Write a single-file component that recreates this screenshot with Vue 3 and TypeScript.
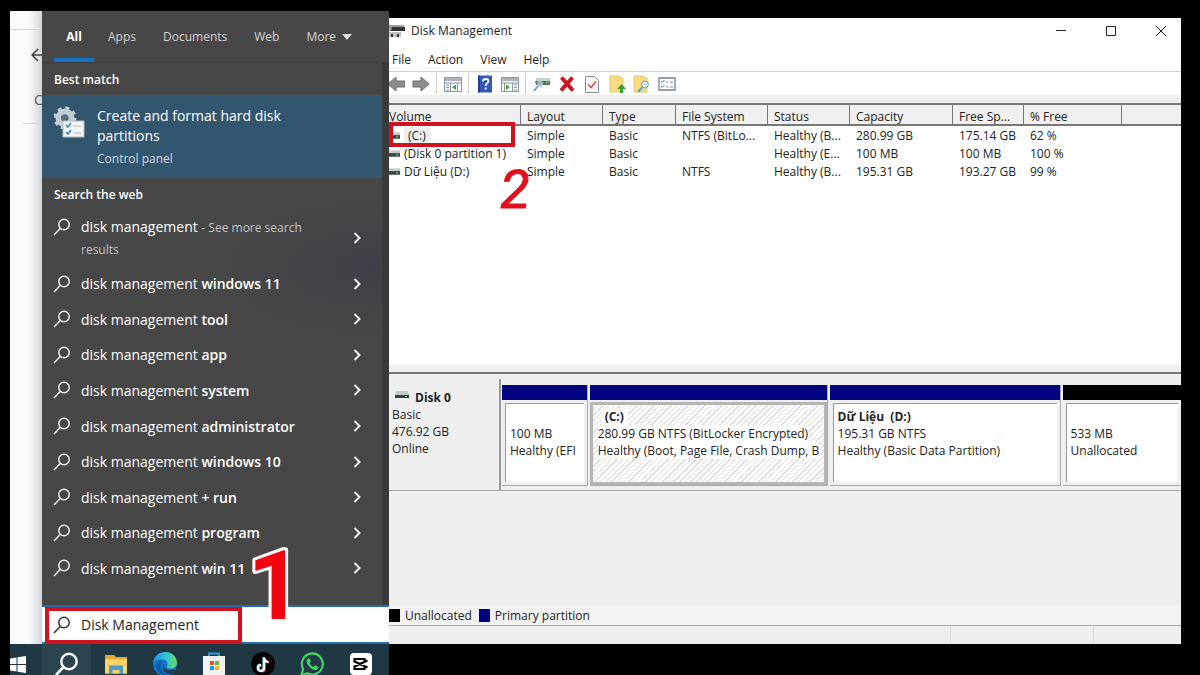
<script setup lang="ts">
import { ref } from 'vue'

interface Volume {
  name: string
  layout: string
  type: string
  fs: string
  status: string
  capacity: string
  free: string
  percent: string
}

interface Partition {
  title: string
  size: string
  status: string
  kind: 'primary' | 'unallocated'
  share: number
  selected?: boolean
}

const query = ref('Disk Management')
const activeTab = ref('All')
const tabs = ['All', 'Apps', 'Documents', 'Web', 'More']
const suggestions = [
  'windows 11', 'tool', 'app', 'system', 'administrator',
  'windows 10', '+ run', 'program', 'win 11',
]
const menus = ['File', 'Action', 'View', 'Help']
const tools = [
  'back', 'forward', '|', 'tree', '|', 'help', 'pane', '|',
  'disk', 'delete', 'check', 'up', 'find', 'properties',
]
const headers = ['Volume', 'Layout', 'Type', 'File System', 'Status', 'Capacity', 'Free Sp...', '% Free', '']

const volumes: Volume[] = [
  { name: '(C:)', layout: 'Simple', type: 'Basic', fs: 'NTFS (BitLo...', status: 'Healthy (B...', capacity: '280.99 GB', free: '175.14 GB', percent: '62 %' },
  { name: '(Disk 0 partition 1)', layout: 'Simple', type: 'Basic', fs: '', status: 'Healthy (E...', capacity: '100 MB', free: '100 MB', percent: '100 %' },
  { name: 'Dữ Liệu (D:)', layout: 'Simple', type: 'Basic', fs: 'NTFS', status: 'Healthy (B...', capacity: '195.31 GB', free: '193.27 GB', percent: '99 %' },
]

const partitions: Partition[] = [
  { title: '', size: '100 MB', status: 'Healthy (EFI', kind: 'primary', share: 85 },
  { title: '(C:)', size: '280.99 GB NTFS (BitLocker Encrypted)', status: 'Healthy (Boot, Page File, Crash Dump, B', kind: 'primary', share: 238, selected: true },
  { title: 'Dữ Liệu\u00a0 (D:)', size: '195.31 GB NTFS', status: 'Healthy (Basic Data Partition)', kind: 'primary', share: 231 },
  { title: '', size: '533 MB', status: 'Unallocated', kind: 'unallocated', share: 119 },
]
</script>

<template>
  <main class="screen">
    <section class="desktop">
      <div class="upper">
        <div class="behind">
          <div class="behind-top"></div>
          <svg class="behind-arrow" viewBox="0 0 12 16" aria-hidden="true"><path d="M12 8H2M8 2L2 8l6 6" fill="none" stroke="#444" stroke-width="1.5" /></svg>
          <div class="behind-text">C</div>
        </div>

        <div class="search">
          <nav class="tabs">
            <button v-for="t in tabs" :key="t" type="button" :class="{ active: t === activeTab }" @click="activeTab = t">
              {{ t }}<svg v-if="t === 'More'" viewBox="0 0 10 6" class="caret" aria-hidden="true"><path d="M0 0h10L5 6z" fill="#ddd" /></svg>
            </button>
          </nav>
          <div class="results">
            <h2>Best match</h2>
            <button type="button" class="best">
              <svg viewBox="0 0 32 32" class="gear" aria-hidden="true">
                <g stroke="#c3cdd4" fill="none">
                  <circle cx="11" cy="12" r="6.5" stroke-width="6" />
                  <circle cx="11" cy="12" r="10" stroke-width="3" stroke-dasharray="4 3.850" />
                </g>
                <circle cx="10.500" cy="12" r="3.500" fill="#586c7a" />
                <path d="M9 15h21v16H9z" fill="#f4f5f6" stroke="#b5b9bc" />
                <path d="M12 19l2 2 3-4M12 26l2 2 3-4" fill="none" stroke="#3b82b8" stroke-width="1.5" />
                <path d="M19 20h8M19 27h8" stroke="#b9bcc0" />
              </svg>
              <span class="best-text">
                <span class="best-title">Create and format hard disk partitions</span>
                <span class="best-sub">Control panel</span>
              </span>
            </button>
            <h2>Search the web</h2>
            <ul class="list">
              <li class="first">
                <button type="button">
                  <svg viewBox="0 0 18 18" class="lens" aria-hidden="true"><circle cx="11" cy="6.5" r="5.2" /><path d="M7.2 10.4L1 17" /></svg>
                  <span class="label">disk management <small>- See more search results</small></span>
                  <svg viewBox="0 0 8 12" class="chev" aria-hidden="true"><path d="M1.5 1l5 5-5 5" /></svg>
                </button>
              </li>
              <li v-for="s in suggestions" :key="s">
                <button type="button">
                  <svg viewBox="0 0 18 18" class="lens" aria-hidden="true"><circle cx="11" cy="6.5" r="5.2" /><path d="M7.2 10.4L1 17" /></svg>
                  <span class="label">disk management <b>{{ s }}</b></span>
                  <svg viewBox="0 0 8 12" class="chev" aria-hidden="true"><path d="M1.5 1l5 5-5 5" /></svg>
                </button>
              </li>
            </ul>
          </div>
          <label class="box">
            <svg viewBox="0 0 18 18" class="lens dark" aria-hidden="true"><circle cx="11" cy="6.5" r="5.2" /><path d="M7.2 10.4L1 17" /></svg>
            <input v-model="query" type="text" aria-label="Search" />
            <span class="mark mark-box"></span>
          </label>
          <svg class="mark-one" viewBox="0 0 40 84" aria-label="Step 1"><text x="20" y="76" text-anchor="middle">1</text></svg>
        </div>
      </div>

      <div class="taskbar">
        <button type="button" class="start" aria-label="Start">
          <svg viewBox="0 0 16 17"><path d="M0 2.5l6.5-1v6.500H0zM7.500 1.300L16 0v8H7.500zM0 9h6.500v6.500l-6.500-1zM7.500 9H16v8l-8.500-1.300z" fill="#fff" /></svg>
        </button>
        <button type="button" class="on" aria-label="Search">
          <svg viewBox="0 0 24 24"><circle cx="14" cy="9.500" r="7.700" fill="none" stroke="#fff" stroke-width="2.400" /><path d="M8.500 15L1 23" stroke="#fff" stroke-width="2.600" /></svg>
        </button>
        <button type="button" aria-label="File Explorer">
          <svg viewBox="0 0 24 24"><path d="M1 3h9l2 2h11v17H1z" fill="#e6a92f" /><path d="M1 7h22v14H1z" fill="#fbd367" /><path d="M5 22v-8.500h14V22h-3.500v-4h-7v4z" fill="#4b9cc9" /></svg>
        </button>
        <button type="button" aria-label="Edge">
          <svg viewBox="0 0 24 24">
            <defs>
              <linearGradient id="edgeTop" x1="0" x2="1" y1="0" y2="0"><stop offset="0" stop-color="#1b8fdc" /><stop offset="0.550" stop-color="#35c1d6" /><stop offset="1" stop-color="#66d957" /></linearGradient>
            </defs>
            <circle cx="12" cy="12" r="12" fill="#1373c9" />
            <path d="M0 11C1 4 6 0 12 0c7 0 12 5 12 10.500 0 4-3 6-6.500 6-3 0-4.500-1.300-3.500-2.500 1.500-2 .5-6-4-6.500C5.500 7 1.500 9 0 11z" fill="url(#edgeTop)" />
            <path d="M9 10c-3 4-1 11 6 12.500-8 1.500-13-5-11-10.500C5 9.500 7.500 9 9 10z" fill="#0c59a4" />
            <path d="M10.500 12c-1 4 3 8 12 5.500-1 2-2.500 3.500-4.500 4.500-6 0-10-5-7.500-10z" fill="#203a46" />
          </svg>
        </button>
        <button type="button" aria-label="Microsoft Store">
          <svg viewBox="0 0 24 24"><path d="M7 5V1.500h10V5" fill="none" stroke="#2c9fd6" stroke-width="1.800" /><path d="M1 4h22v18q0 2-2 2H3q-2 0-2-2z" fill="#f2f2f2" /><path d="M8 9h4v4H8z" fill="#e8502c" /><path d="M13 9h4v4h-4z" fill="#72b42b" /><path d="M8 14h4v4H8z" fill="#1d9be0" /><path d="M13 14h4v4h-4z" fill="#f7b51b" /></svg>
        </button>
        <button type="button" aria-label="TikTok">
          <svg viewBox="0 0 24 24"><circle cx="12" cy="12" r="12" fill="#000" /><g fill="none" stroke-width="2.200"><path d="M12.500 5v10.500a3 3 0 1 1-3-3M12.500 5.500c.5 2.500 2 4 4.500 4" stroke="#3fd6dc" /><path d="M13.700 6v10.500a3 3 0 1 1-3-3M13.700 6.500c.5 2.500 2 4 4.500 4" stroke="#f13a5f" /><path d="M13 5.500V16a3 3 0 1 1-3-3M13 6c.5 2.500 2 4 4.500 4" stroke="#fff" /></g></svg>
        </button>
        <button type="button" aria-label="WhatsApp">
          <svg viewBox="0 0 24 24"><path d="M1.500 23l1.600-6A10.500 10.500 0 1 1 7.500 21.300z" fill="#203a46" stroke="#43d160" stroke-width="2.200" /><path d="M8 6.500c-2 1-2 3.500 0 6.500s5 5 7.500 5c1.500 0 3-1.500 3-3l-3.500-1.700-1.500 1.700c-2-1-3-2-4-4L11 9.500 9.500 6.500z" fill="#43d160" /></svg>
        </button>
        <button type="button" aria-label="CapCut">
          <svg viewBox="0 0 24 24"><rect x="1" y="1" width="22" height="22" rx="4" fill="#fff" /><path d="M15.500 10V7H5.500v2.500l13 6M15.500 14v3H5.500v-2.500l13-6" fill="none" stroke="#000" stroke-width="2.200" /></svg>
        </button>
      </div>
    </section>

    <section class="window">
      <header class="title">
        <svg viewBox="0 0 16 16" class="app-icon" aria-hidden="true"><path d="M0 2h15l1 6H0z" fill="#9aa09f" /><path d="M3 4h13v4H2z" fill="#2f3436" /><path d="M0 9h12v5H0z" fill="#bfc2c2" /><path d="M2 11h2v3H2zM8 11h2v3H8z" fill="#333" /></svg>
        <h1>Disk Management</h1>
        <button type="button" aria-label="Minimize"><svg viewBox="0 0 12 12"><path d="M1 5.500h10" /></svg></button>
        <button type="button" aria-label="Maximize"><svg viewBox="0 0 12 12"><path d="M1.500 1.500h9v9h-9z" /></svg></button>
        <button type="button" aria-label="Close"><svg viewBox="0 0 12 12"><path d="M1 1l10 10M11 1L1 11" /></svg></button>
      </header>
      <nav class="menu"><button v-for="m in menus" :key="m" type="button">{{ m }}</button></nav>
      <div class="toolbar">
        <template v-for="(t, i) in tools" :key="i">
          <span v-if="t === '|'" class="sep"></span>
          <button v-else type="button" :class="{ clipped: t === 'back' }" :aria-label="t">
            <svg v-if="t === 'back'" viewBox="2 0 16 18"><path d="M1 9l8-7v4h9v6H9v4z" fill="#8d8d8d" stroke="#6d6d6d" /></svg>
            <svg v-else-if="t === 'forward'" viewBox="0 0 18 18"><path d="M17 9l-8-7v4H1v6h8v4z" fill="#8d8d8d" stroke="#6d6d6d" /></svg>
            <svg v-else-if="t === 'tree' || t === 'pane'" viewBox="0 0 18 18">
              <path d="M.5 2.500h17v14H.5z" fill="#f5f7f8" stroke="#8d979e" /><path d="M1 3h16v3H1z" fill="#a9b4bb" /><path d="M1 8h16" stroke="#8d979e" />
              <template v-if="t === 'tree'"><path d="M6.500 8v8M13.500 8v8" stroke="#8d979e" /><path d="M2 10h3M2 12.500h3M2 15h3" stroke="#7d9ebd" /><path d="M12 9.500v5.500L8 12.200z" fill="#3fa535" /></template>
              <template v-else><path d="M3.500 8v8M11.500 8v8" stroke="#8d979e" /><path d="M13 10h3M13 12.500h3M13 15h3" stroke="#7d9ebd" /><path d="M5 9.500v5.500l4-2.800z" fill="#3fa535" /></template>
            </svg>
            <svg v-else-if="t === 'help'" viewBox="0 0 18 18"><path d="M2 .5h14v17H2z" fill="#3558b7" /><path d="M2 .5h2v17H2z" fill="#243f8d" /><path d="M7 6.500q0-2.500 2.700-2.500t2.700 2.300q0 1.500-1.700 2.500-1 .7-1 2.200M9.700 12.500v2" fill="none" stroke="#fff" stroke-width="1.800" /></svg>
            <svg v-else-if="t === 'disk'" viewBox="0 0 18 18"><path d="M3 3h14v3H3z" fill="#c9cece" /><path d="M2 6h15v4H3z" fill="#59686b" /><path d="M13 7.500h2.500" stroke="#5fe066" stroke-width="1.500" /><circle cx="7" cy="9" r="3.200" fill="#a9cde3" fill-opacity=".8" /><path d="M5 11l-4 5" stroke="#6d9fc4" stroke-width="2" /></svg>
            <svg v-else-if="t === 'delete'" viewBox="0 0 18 18"><path d="M3.500 2.500l11.500 13M14.500 2.500L3 15.500" stroke="#cf1420" stroke-width="4" /></svg>
            <svg v-else-if="t === 'check'" viewBox="0 0 18 18"><path d="M2.500 1.500h9l4 4v12h-13z" fill="#fafafa" stroke="#8c8c8c" /><path d="M5 9.500l3 3 5-6" fill="none" stroke="#dd5147" stroke-width="1.700" /></svg>
            <svg v-else-if="t === 'up'" viewBox="0 0 18 18"><path d="M2 1h9l1 2h3v14H2z" fill="#f6dd84" stroke="#e5c55c" /><path d="M12 18v-4H9l4.500-5 4.500 5h-3v4z" fill="#35a22f" /></svg>
            <svg v-else-if="t === 'find'" viewBox="0 0 18 18"><path d="M1 1h9l1 2h3v14H1z" fill="#f6dd84" stroke="#e5c55c" /><circle cx="12" cy="9.500" r="3.500" fill="#cfe6f5" stroke="#7da4bf" /><path d="M9.500 12L5 17" stroke="#6d9fc4" stroke-width="2" /></svg>
            <svg v-else viewBox="0 0 18 18"><path d="M1 3h16v12H1z" fill="#fbfbfb" stroke="#77838d" stroke-width="1.300" /><path d="M3 6l1.200 1.500L6.500 5M3 11l1.200 1.500L6.500 10" fill="none" stroke="#2f7ec1" /><path d="M8 7h2.500M12 7h3M8 12h2.500M12 12h3" stroke="#8b959d" /></svg>
          </button>
        </template>
      </div>

      <div class="volumes">
        <table>
          <colgroup><col class="c1" /><col class="c2" /><col class="c3" /><col class="c4" /><col class="c5" /><col class="c6" /><col class="c7" /><col class="c8" /><col /></colgroup>
          <thead><tr><th v-for="h in headers" :key="h" scope="col">{{ h }}</th></tr></thead>
          <tbody>
            <tr v-for="(v, i) in volumes" :key="v.name">
              <td><div class="volume" :class="{ picked: i === 0 }"><svg viewBox="0 0 12 8" class="drive" aria-hidden="true"><path d="M0 0h12v3H0z" fill="#c5caca" /><path d="M0 3h12v4H0z" fill="#3d4547" /><path d="M8 5h2" stroke="#52e05b" stroke-width="1.500" /></svg><span>{{ v.name }}</span></div></td>
              <td>{{ v.layout }}</td><td>{{ v.type }}</td><td>{{ v.fs }}</td><td>{{ v.status }}</td><td>{{ v.capacity }}</td><td>{{ v.free }}</td><td>{{ v.percent }}</td><td></td>
            </tr>
          </tbody>
        </table>
        <span class="mark mark-volume"></span>
        <svg class="mark-two" viewBox="0 0 44 54" aria-label="Step 2"><text x="22" y="46" text-anchor="middle">2</text></svg>
      </div>

      <div class="graph">
        <div class="splitter"></div>
        <div class="disk-row">
          <div class="disk">
            <div class="disk-name"><svg viewBox="0 0 14 8" aria-hidden="true"><path d="M1 0h12l1 4H0z" fill="#bcc9c4" /><path d="M0 4h14v3H0z" fill="#39413f" /><path d="M10 5.500h2" stroke="#57d95f" /></svg><b>Disk 0</b></div>
            <div>Basic</div><div>476.92 GB</div><div>Online</div>
          </div>
          <div class="parts">
            <div v-for="p in partitions" :key="p.size" class="part" :class="[p.kind, { selected: p.selected }]" :style="{ flexGrow: p.share }">
              <div class="bar"></div>
              <div class="body">
                <div><b>{{ p.title || '\u00a0' }}</b></div><div><span>{{ p.size }}</span></div><div><span>{{ p.status }}</span></div>
              </div>
            </div>
          </div>
        </div>
        <div class="empty"></div>
        <div class="legend"><i class="key black"></i><span>Unallocated</span><i class="key navy"></i><span>Primary partition</span></div>
        <div class="status"><span></span><span></span><span></span></div>
      </div>
    </section>
  </main>
</template>

<style>
body { margin: 0; background: #000; }
</style>

<style scoped>
* { box-sizing: border-box; }
.screen {
  display: flex;
  height: 100vh;
  min-height: 600px;
  padding: 11px 19px 0 10px;
  background: #000;
  overflow: hidden;
  font: 12px/18px "Open Sans", "Noto Sans", sans-serif;
  color: #222;
}
button { border: 0; padding: 0; margin: 0; background: none; font: inherit; color: inherit; text-align: left; }
svg { display: block; flex: none; }
h1, h2 { margin: 0; }

.desktop { flex: none; width: 379px; display: flex; flex-direction: column; }
.upper { flex: 1; min-height: 0; display: flex; }
.behind { width: 32px; background: linear-gradient(90deg, #fafbfd 60%, #d4d5d8); overflow: hidden; }
.behind-top { height: 19px; border-bottom: 1px solid #d5d6da; }
.behind-arrow { width: 12px; height: 16px; margin: 17px 0 0 20px; }
.behind-text { margin: 26px 0 0 13px; padding: 0 0 12px 11px; border-bottom: 1px solid #d0d1d4; font-size: 14px; line-height: 22px; color: #555; }

.search { position: relative; flex: 1; min-width: 0; display: flex; flex-direction: column; background: #474747; color: #fff; }
.tabs { display: flex; height: 52px; padding-left: 12px; border-bottom: 1px solid #3e3e3e; color: #d4d4d4; }
.tabs button { display: flex; align-items: center; justify-content: center; margin-right: 14px; padding-top: 4px; border-bottom: 4px solid transparent; }
.tabs button:nth-child(n + 2) { margin-right: 27px; }
.tabs .active { width: 40px; border-color: #1472c4; color: #fff; font-weight: 700; }
.caret { width: 10px; height: 6px; margin-left: 6px; }
.results {
  flex: 1; min-height: 0; display: flex; flex-direction: column; border-right: 7px solid #3a3a3a;
  background: radial-gradient(ellipse 160px 70px at 100% 205px, #403f49, transparent);
}
h2 { padding: 7px 12px 6px; font-size: 12px; line-height: 19px; font-weight: 600; }
.best { display: flex; gap: 11px; height: 83px; padding: 11px 12px; background: #33566f; }
.gear { width: 32px; height: 32px; }
.best-text { display: flex; flex-direction: column; max-width: 210px; }
.best-title { font-size: 14px; line-height: 20px; }
.best-sub { margin-top: 4px; color: #d0dae2; }
.list { flex: 1; display: flex; flex-direction: column; margin: 0; padding: 0 0 19px; list-style: none; }
.list li { flex: 1; display: flex; }
.list .first { flex: none; height: 56px; }
.list button { flex: 1; display: flex; align-items: center; gap: 10px; padding: 0 21px 0 11px; font-size: 14px; line-height: 21px; }
.lens { width: 18px; height: 18px; fill: none; stroke: #eee; stroke-width: 1.5; }
.dark { stroke: #333; }
.first .lens { align-self: flex-start; margin-top: 8px; }
.label { flex: 1; }
.label b { font-weight: 600; }
.label small { font-size: 12px; color: #c4c4c4; }
.first .label { padding-right: 30px; }
.chev { width: 8px; height: 12px; fill: none; stroke: #eee; stroke-width: 2; }
.box { position: relative; display: flex; align-items: center; gap: 10px; height: 39px; padding: 0 11px; background: #fff; border: solid #1f6fb4; border-width: 2px 0; }
.box input { flex: 1; min-width: 0; border: 0; padding: 0; outline: 0; background: none; color: #222; font: inherit; font-size: 14px; }
.mark { position: absolute; border: 4px solid #d01120; pointer-events: none; }
.mark-box { left: 3px; top: 0; width: 197px; height: 37px; }
.mark-one { position: absolute; left: 213px; bottom: 17px; width: 40px; height: 84px; overflow: visible; }
.mark-one text { font: 700 96px "Liberation Sans Narrow", Roboto, sans-serif; fill: #f4040f; stroke: #fff; stroke-width: 6px; stroke-linejoin: round; paint-order: stroke; }

.taskbar { flex: none; display: flex; height: 31px; background: #203843; overflow: hidden; }
.taskbar button { width: 49px; display: flex; justify-content: center; padding-top: 8px; }
.taskbar .start { width: 32px; justify-content: flex-start; padding-top: 12px; }
.taskbar .start svg { width: 16px; height: 17px; }
.taskbar .on { background: #2b444f; }
.taskbar svg { width: 24px; height: 24px; }

.window { flex: 1; min-width: 0; display: flex; flex-direction: column; margin: 7px 0 31px; background: #fff; }
.title { display: flex; align-items: center; height: 25px; }
.app-icon { width: 16px; height: 16px; }
h1 { flex: 1; padding-left: 6px; font-size: 12px; font-weight: 400; }
.title button { width: 50px; height: 24px; display: flex; align-items: center; justify-content: center; }
.title button:last-child { width: 45px; padding-left: 5px; }
.title button svg { width: 12px; height: 12px; fill: none; stroke: #222; stroke-width: 1; }
.menu { display: flex; gap: 17px; height: 29px; padding: 5px 3px 0; border-bottom: 1px solid #d0d0d0; }
.toolbar { display: flex; align-items: center; height: 31px; border-bottom: 8px solid #eee; }
.toolbar button { width: 25px; display: flex; justify-content: center; }
.toolbar svg { width: 18px; height: 18px; }
.toolbar .clipped { width: 19px; justify-content: flex-start; }
.toolbar .clipped svg { width: 16px; }
.sep { width: 1px; height: 21px; margin: 0 3px; background: #cfcfcf; }

.volumes { position: relative; flex: 262; min-height: 0; }
table { width: 100%; border-collapse: separate; border-spacing: 0; table-layout: fixed; }
.c1 { width: 132px; } .c2 { width: 82px; } .c3 { width: 73px; } .c4 { width: 92px; } .c5 { width: 82px; }
.c6 { width: 103px; } .c7 { width: 71px; } .c8 { width: 98px; }
th { height: 22px; padding: 4px 0 0 6px; background: #f0f0f0; border: solid #777; border-width: 2px 1px 2px 0; font-weight: 400; text-align: left; line-height: 15px; white-space: nowrap; }
th:first-child { padding-left: 0; }
th:last-child { border-right: 0; }
tbody::before { content: ""; display: table-row; height: 1px; }
td { height: 18px; padding: 0 0 0 6px; line-height: 18px; white-space: nowrap; }
td:first-child { padding: 0; }
.volume { display: flex; align-items: center; gap: 4px; }
.picked span { padding: 0 4px; background: #eee; }
.drive { width: 11px; height: 8px; }
.mark-volume { left: 0; top: 19px; width: 126px; height: 25px; }
.mark-two { position: absolute; left: 104px; top: 59px; width: 44px; height: 54px; overflow: visible; }
.mark-two text { font: italic 400 54px Roboto, sans-serif; fill: #e3101c; stroke: #e3101c; stroke-width: 1px; stroke-linejoin: round; }

.graph { flex: 279; min-height: 0; display: flex; flex-direction: column; background: #efefef; }
.splitter { height: 9px; border-bottom: 2px solid #777; }
.disk-row { display: flex; height: 117px; padding-top: 5px; border-bottom: 1px solid #aaa; }
.disk { width: 112px; padding: 9px 3px; border-right: 2px solid #999; line-height: 17px; }
.disk-name { display: flex; align-items: center; gap: 6px; padding: 1px 0 0 3px; }
.disk-name svg { width: 14px; height: 8px; margin-bottom: 6px; }
.parts { flex: 1; min-width: 0; display: flex; gap: 2px; padding: 6px 0 4px 1px; }
.part { flex: 1 1 0; min-width: 0; display: flex; flex-direction: column; border-right: 1px solid #aaa; border-bottom: 1px solid #aaa; }
.part:last-child { border-right: 0; }
.bar { height: 15px; background: #000080; }
.unallocated .bar { background: #000; }
.body { flex: 1; margin: 3px; padding: 4px 0 0 4px; border: solid #999; border-width: 1px 0 0 1px; background: #fff; line-height: 17px; white-space: nowrap; overflow: hidden; }
.selected .body { margin: 2px 0 0; border: 3px solid #b5b5b5; padding: 3px 0 0 5px; background: repeating-linear-gradient(135deg, #fff 0 3px, #ddd 3px 4px); }
.selected .body span { background: #fff; }
.selected .body b { margin-left: 3px; padding: 0 4px; background: #fff; }
.empty { flex: 1; }
.legend { display: flex; align-items: center; height: 20px; border-bottom: 1px solid #aaa; background: #f2f2f2; }
.key { width: 11px; height: 13px; }
.black { background: #000; }
.navy { background: #000080; }
.legend span { padding: 0 7px 0 5px; }
.status { display: flex; height: 18px; }
.status span { width: 143px; border-right: 1px solid #ddd; }
.status span:first-child { flex: 1; }
.status span:last-child { width: 87px; border: 0; }
</style>
